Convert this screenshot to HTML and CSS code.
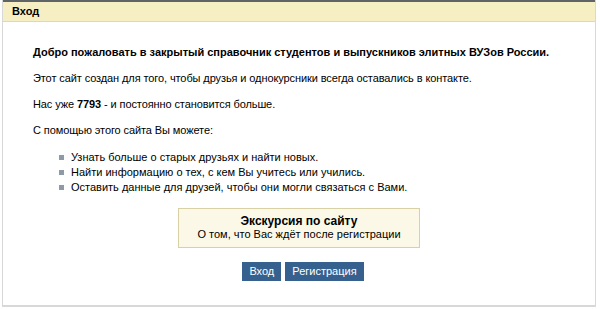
FILE: index.html
```html
<!DOCTYPE html>
<html lang="ru">
<head>
    <meta charset="UTF-8">
    <title>Вход</title>
    <link rel="stylesheet" href="styles.css">
</head>
<body>
    <div class="box">
        <div class="box-header">Вход</div>
        <div class="box-body">
            <p class="welcome">Добро пожаловать в закрытый справочник студентов и выпускников элитных ВУЗов России.</p>
            <p>Этот сайт создан для того, чтобы друзья и однокурсники всегда оставались в контакте.</p>
            <p>Нас уже <b>7793</b> - и постоянно становится больше.</p>
            <p>С помощью этого сайта Вы можете:</p>
            <ul class="features">
                <li>Узнать больше о старых друзьях и найти новых.</li>
                <li>Найти информацию о тех, с кем Вы учитесь или учились.</li>
                <li>Оставить данные для друзей, чтобы они могли связаться с Вами.</li>
            </ul>
            <div class="tour">
                <div class="tour-title">Экскурсия по сайту</div>
                <div class="tour-text">О том, что Вас ждёт после регистрации</div>
            </div>
            <div class="buttons">
                <button class="btn">Вход</button>
                <button class="btn">Регистрация</button>
            </div>
        </div>
    </div>
</body>
</html>
```

FILE: styles.css
```css
/* General */
body {
    margin: 0;
    padding: 0;
    background-color: #fff;
    font-family: "Liberation Sans", Tahoma, sans-serif;
    font-size: 11px;
    color: #000;
}

.box {
    width: 592px;
    margin-left: 2px;
    border-left: 1px solid #d8d8d8;
    border-right: 1px solid #d8d8d8;
    border-bottom: 2px solid #d8d8d8;
}

.box-header {
    background-color: #f7efc4;
    border-top: 2px solid #5f6468;
    border-bottom: 1px solid #e2d8a8;
    padding: 3px 9px 4px;
    font-weight: bold;
    height: 12px;
    line-height: 12px;
}

.box-body {
    padding: 24px 30px 24px;
}

.box-body p {
    margin: 0 0 13px;
    line-height: 13px;
    letter-spacing: -0.1px;
}

.box-body .welcome {
    font-weight: bold;
    font-size: 11px;
    letter-spacing: 0;
    margin-bottom: 13px;
}

/* Feature list */
.features {
    list-style: none;
    margin: 0 0 14px;
    padding: 0 0 0 24px;
}

.features li {
    position: relative;
    padding-left: 14px;
    line-height: 14px;
    margin-bottom: 1px;
}

.features li::before {
    content: "";
    position: absolute;
    left: 2px;
    top: 5px;
    width: 5px;
    height: 5px;
    background-color: #8f9aa8;
}

/* Tour box */
.tour {
    width: 240px;
    margin: 0 auto;
    background-color: #fbf8e8;
    border: 1px solid #d9d1a6;
    text-align: center;
    padding: 5px 0 6px;
}

.tour-title {
    font-weight: bold;
    font-size: 12px;
    line-height: 14px;
}

.tour-text {
    line-height: 13px;
}

/* Buttons */
.buttons {
    display: flex;
    justify-content: center;
    gap: 4px;
    margin-top: 14px;
    padding-left: 8px;
}

.btn {
    background-color: #36618e;
    color: #fff;
    border: none;
    font-family: inherit;
    font-size: 11px;
    padding: 3px 7px 4px;
    line-height: 12px;
    cursor: pointer;
}
```
